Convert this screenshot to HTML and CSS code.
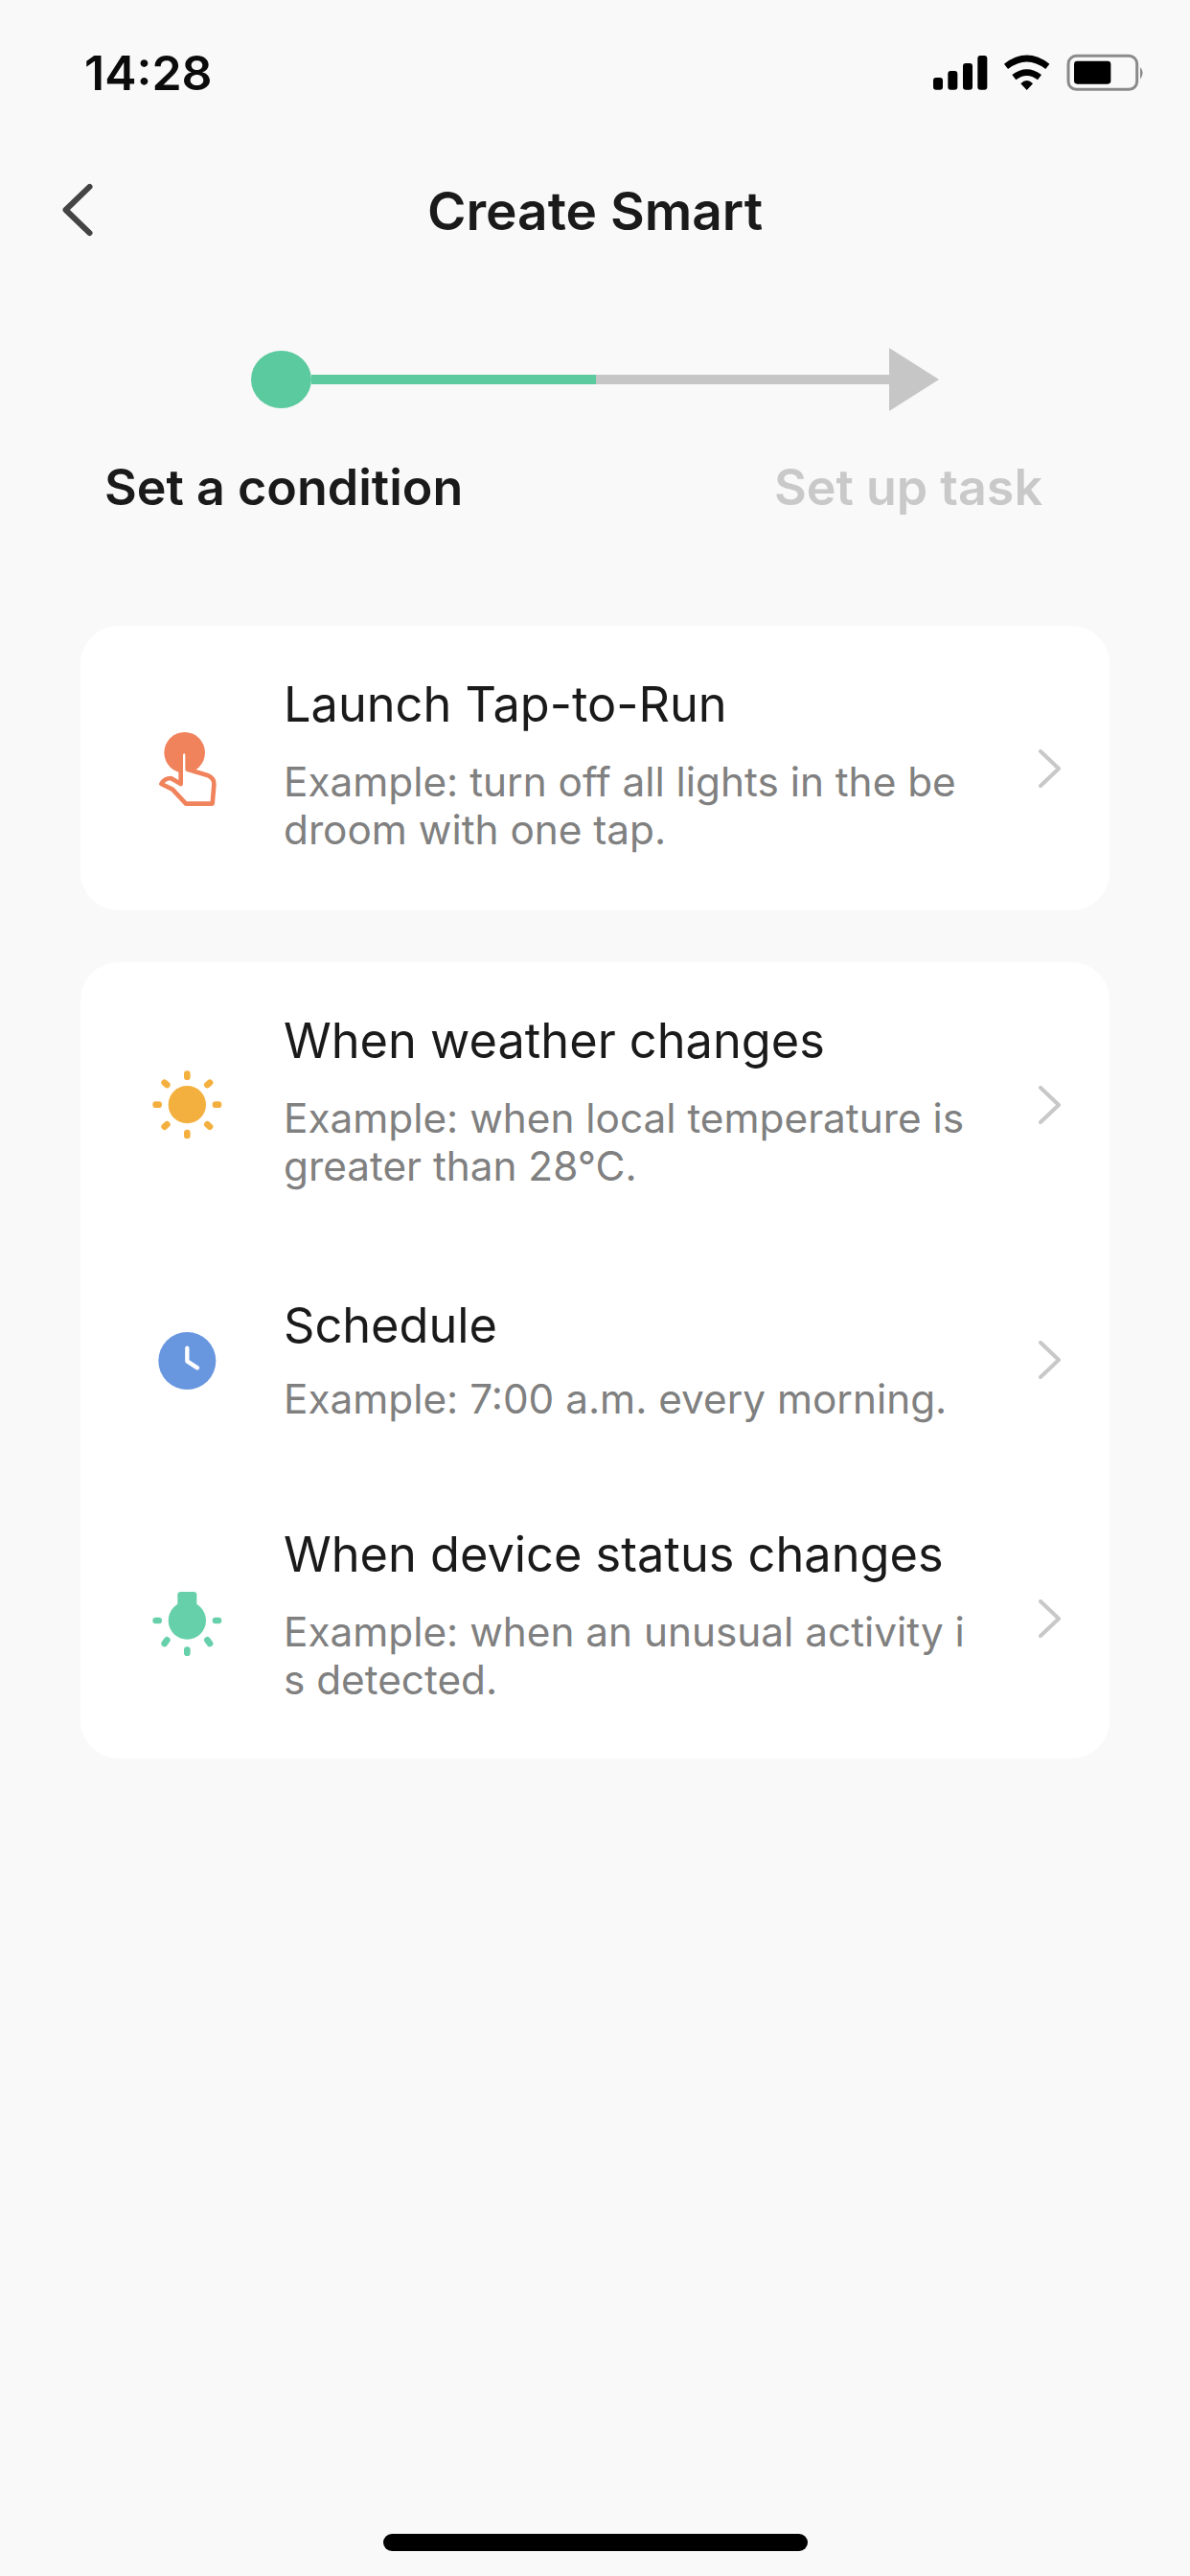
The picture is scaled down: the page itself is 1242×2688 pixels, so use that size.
FILE: index.html
```html
<!DOCTYPE html>
<html lang="en">
<head>
<meta charset="utf-8">
<title>Create Smart</title>
<link rel="stylesheet" href="styles.css">
</head>
<body>
<div class="screen">
  <header class="status">
    <span class="time">14:28</span>
    <svg class="status-icons" viewBox="0 0 900 240" aria-hidden="true">
      <rect x="222" y="153" width="30" height="38" rx="9"/>
      <rect x="268" y="132" width="30" height="59" rx="9"/>
      <rect x="315" y="108" width="30" height="83" rx="9"/>
      <rect x="361" y="84" width="30" height="107" rx="9"/>
      <path class="wifi" d="M450 118Q515 68 580 118"/>
      <path class="wifi" d="M475 152Q515 122 555 152"/>
      <path d="M496 172Q515 152 534 172L515 192Z"/>
      <rect class="batt" x="645" y="85" width="215" height="105" rx="25"/>
      <rect x="663" y="101" width="115" height="72" rx="10"/>
      <path class="nub" d="M870 120Q886 138 870 158Z"/>
    </svg>
  </header>

  <nav class="nav">
    <svg class="back" viewBox="0 0 40 60" aria-hidden="true"><path d="M33 4L6 30L33 56"/></svg>
    <h1 class="title">Create Smart</h1>
  </nav>

  <div class="steps">
    <div class="track">
      <span class="dot"></span>
      <span class="line line-done"></span>
      <span class="line line-todo"></span>
      <span class="head"></span>
    </div>
    <div class="labels">
      <span class="label">Set a condition</span>
      <span class="label label-off">Set up task</span>
    </div>
  </div>

  <section class="card">
    <div class="row">
      <svg class="icon" viewBox="0 15 390 390" aria-hidden="true">
        <circle cx="188" cy="160" r="64" fill="#f0835c"/>
        <path d="M176 258V165Q187 145 197 165V212L262 232Q282 240 280 262L275 320H192L150 275L115 258Q125 240 145 240Z" fill="#fff" stroke="#f0835c" stroke-width="14" stroke-linejoin="round"/>
      </svg>
      <div class="text">
        <div class="name">Launch Tap-to-Run</div>
        <div class="desc">Example: turn off all lights in the be<br>droom with one tap.</div>
      </div>
      <svg class="chev" viewBox="0 0 24 40" aria-hidden="true"><path d="M2 2L21 20L2 38"/></svg>
    </div>
  </section>

  <section class="card">
    <div class="row">
      <svg class="icon" viewBox="0 6 390 390" aria-hidden="true">
        <circle cx="196" cy="200" r="59" fill="#f4b03f"/>
        <g stroke="#f4b03f" stroke-width="20" stroke-linecap="round">
          <path d="M196 104V113M196 288V297M98 200H107M285 200H294M125 131L133 138M267 131L259 138M125 269L133 262M267 269L259 262"/>
        </g>
      </svg>
      <div class="text">
        <div class="name">When weather changes</div>
        <div class="desc">Example: when local temperature is<br>greater than 28°C.</div>
      </div>
      <svg class="chev" viewBox="0 0 24 40" aria-hidden="true"><path d="M2 2L21 20L2 38"/></svg>
    </div>
    <div class="row row-short">
      <svg class="icon" viewBox="0 -3 390 390" aria-hidden="true">
        <circle cx="196" cy="195" r="90" fill="#6897e0"/>
        <path d="M196 155V196L228 217" fill="none" stroke="#fff" stroke-width="13" stroke-linecap="round" stroke-linejoin="round"/>
      </svg>
      <div class="text">
        <div class="name">Schedule</div>
        <div class="desc">Example: 7:00 a.m. every morning.</div>
      </div>
      <svg class="chev" viewBox="0 0 24 40" aria-hidden="true"><path d="M2 2L21 20L2 38"/></svg>
    </div>
    <div class="row row-last">
      <svg class="icon" viewBox="0 3 390 390" aria-hidden="true">
        <circle cx="196" cy="204" r="59" fill="#66d0ab"/>
        <rect x="166" y="114" width="60" height="60" rx="10" fill="#66d0ab"/>
        <g stroke="#66d0ab" stroke-width="20" stroke-linecap="round">
          <path d="M98 204H107M285 204H294M125 276L133 265M267 276L259 265M196 296V305"/>
        </g>
      </svg>
      <div class="text">
        <div class="name">When device status changes</div>
        <div class="desc">Example: when an unusual activity i<br>s detected.</div>
      </div>
      <svg class="chev" viewBox="0 0 24 40" aria-hidden="true"><path d="M2 2L21 20L2 38"/></svg>
    </div>
  </section>

  <div class="home"></div>
</div>
</body>
</html>
```
FILE: styles.css
```css
* { box-sizing: border-box; }
html, body { margin: 0; padding: 0; }
body { background: #f9f9f9; font-family: Inter, "Liberation Sans", sans-serif; color: #1a1a1a; }
.screen { width: 1242px; height: 2688px; display: flex; flex-direction: column; }

.status { height: 150px; display: flex; justify-content: space-between; align-items: flex-start; padding: 30px 42px 0 88px; }
.time { margin-top: 17px; font-size: 50px; font-weight: 600; line-height: 58px; color: #0b0b0b; }
.status-icons { width: 300px; height: 80px; }
.status-icons rect, .status-icons path { fill: #000; }
.status-icons .wifi { fill: none; stroke: #000; stroke-width: 20; }
.status-icons .batt { fill: none; stroke: #8a8a8a; stroke-width: 9; }
.status-icons .nub { fill: #8a8a8a; }

.nav { height: 140px; position: relative; display: flex; justify-content: center; align-items: center; }
.back { position: absolute; left: 63px; top: 41px; width: 37px; height: 56px; }
.back path { fill: none; stroke: #444; stroke-width: 6.5; stroke-linecap: round; stroke-linejoin: round; }
.title { margin: 0; font-size: 55px; font-weight: 600; line-height: 70px; }

.steps { padding-top: 73px; }
.track { display: flex; align-items: center; padding-left: 262px; height: 66px; }
.dot { width: 63px; height: 60px; border-radius: 50%; background: #5bca9e; }
.line { height: 10px; }
.line-done { width: 297px; background: #5bca9e; }
.line-todo { width: 306px; background: #c6c6c6; }
.head { width: 0; height: 0; border-left: 52px solid #c6c6c6; border-top: 33px solid transparent; border-bottom: 33px solid transparent; }
.labels { display: flex; justify-content: space-between; padding: 50px 154px 0 109px; }
.label { font-size: 52px; font-weight: 600; line-height: 60px; }
.label-off { color: #c9c9c9; }

.card { margin: 114px 84px 0; background: #fff; border-radius: 40px; }
.card + .card { margin-top: 54px; }
.row { height: 297px; display: flex; align-items: center; padding-left: 46px; }
.row-short { height: 236px; }
.row-last { height: 298px; padding-top: 5px; }
.icon { width: 130px; height: 130px; flex: none; }
.text { flex: none; width: 788px; margin-left: 36px; padding-bottom: 8px; }
.name { font-size: 50.5px; line-height: 60px; color: #1a1a1a; }
.desc { margin-top: 26px; font-size: 42.3px; line-height: 50px; color: #808080; }
.row-short .text { padding-bottom: 0; }
.row-short .desc { margin-top: 22px; }
.chev { width: 24px; height: 40px; flex: none; }
.chev path { fill: none; stroke: #c8c8c8; stroke-width: 4; stroke-linecap: round; stroke-linejoin: round; }

.home { margin: auto auto 26px; width: 443px; height: 18px; border-radius: 9px; background: #000; }
```
